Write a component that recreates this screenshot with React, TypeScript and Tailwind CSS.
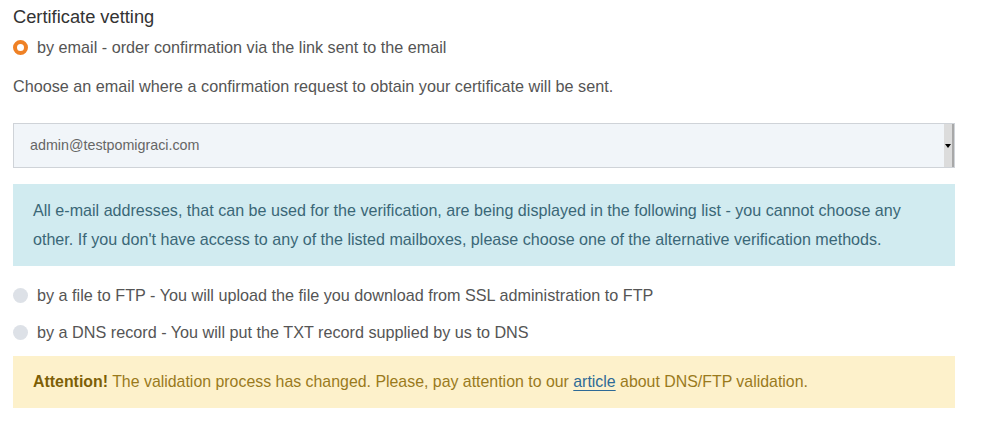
import React from 'react';

function Radio({ checked }: { checked?: boolean }) {
  if (checked) {
    return <span className="inline-block w-[15px] h-[15px] rounded-full border-[4px] border-[#ef8125] bg-white shrink-0" />;
  }
  return <span className="inline-block w-[15px] h-[15px] rounded-full bg-[#dde1e7] shrink-0" />;
}

export default function App() {
  return (
    <div className="min-h-screen bg-white font-['Liberation_Sans',sans-serif] text-[#555] text-[16.2px]">
      <div className="w-[942px] ml-[13px]">
        <h3 className="pt-[6px] text-[18.3px] leading-[22px] text-[#333]">Certificate vetting</h3>

        <label className="mt-[8px] flex items-center gap-[9px] h-[22px]">
          <Radio checked />
          <span>by email - order confirmation via the link sent to the email</span>
        </label>

        <p className="mt-[17px] leading-[22px]">
          Choose an email where a confirmation request to obtain your certificate will be sent.
        </p>

        <div className="mt-[26px] h-[45px] flex items-stretch border border-[#cfd3d8] bg-[#f1f5f9]">
          <div className="flex-1 flex items-center pl-[16px] text-[14.3px] text-[#666]">admin@testpomigraci.com</div>
          <div className="w-[10px] flex items-center justify-center bg-[#dcdcdc] border-r-2 border-[#a8a8a8]">
            <span className="w-0 h-0 border-l-[3px] border-r-[3px] border-t-[4px] border-l-transparent border-r-transparent border-t-black" />
          </div>
        </div>

        <div className="mt-[16px] bg-[#d1ebf0] px-[20px] py-[12px] leading-[29px] text-[#3a6777] text-[16.1px] whitespace-nowrap">
          All e-mail addresses, that can be used for the verification, are being displayed in the following list - you cannot choose any
          <br />
          other. If you don't have access to any of the listed mailboxes, please choose one of the alternative verification methods.
        </div>

        <label className="mt-[18px] flex items-center gap-[9px] h-[22px]">
          <Radio />
          <span>by a file to FTP - You will upload the file you download from SSL administration to FTP</span>
        </label>

        <label className="mt-[15px] flex items-center gap-[9px] h-[22px]">
          <Radio />
          <span>by a DNS record - You will put the TXT record supplied by us to DNS</span>
        </label>

        <div className="mt-[13px] h-[52px] flex items-center bg-[#fdf1cb] px-[20px] text-[#9a7a1c] text-[15.9px]">
          <span>
            <b className="font-bold text-[#7d5f06]">Attention!</b> The validation process has changed. Please, pay attention to our{' '}
            <a href="#" className="text-[#2e6a96] underline underline-offset-[3px]">article</a> about DNS/FTP validation.
          </span>
        </div>
      </div>
    </div>
  );
}
